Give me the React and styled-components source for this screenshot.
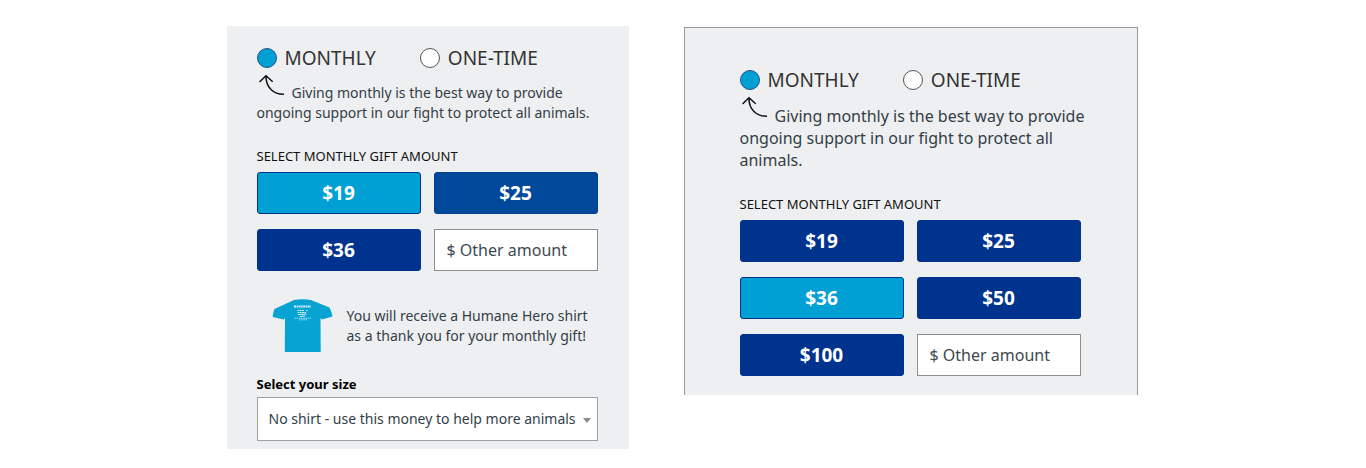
import React, { useState } from "react";
import styled, { createGlobalStyle } from "styled-components";

const GlobalStyle = createGlobalStyle`
  *, *::before, *::after { box-sizing: border-box; }
  body {
    margin: 0;
    background: #fff;
    color: #333e48;
    font-family: "Noto Sans", "Open Sans", sans-serif;
  }
`;

const Page = styled.main`
  display: flex;
  flex-wrap: wrap;
  justify-content: center;
  align-items: flex-start;
  gap: 55px;
  padding: 26px 18px 16px 16px;
`;

const Panel = styled.form`
  flex: 0 1 402px;
  min-width: 0;
  padding: 21px 31px 8px 30px;
  background: #eeeff1;
`;

const FramedPanel = styled(Panel)`
  flex-basis: 454px;
  margin-top: 1px;
  padding: 41px 56px 19px 55px;
  border: 1px solid #97989b;
  border-bottom: 0;
`;

const Group = styled.fieldset`
  min-width: 0;
  margin: 0;
  padding: 0;
  border: 0;
`;

const AmountGroup = styled(Group)`
  margin-top: 24px;
`;

const FrequencyRow = styled.div`
  display: flex;
  flex-wrap: wrap;
  gap: 44px;
`;

const FrequencyLabel = styled.label`
  display: flex;
  align-items: center;
  gap: 8px;
  color: #333;
  font-size: 19px;
  line-height: 22px;
  cursor: pointer;
`;

const Radio = styled.input`
  appearance: none;
  width: 20px;
  height: 20px;
  margin: 0;
  border: 1px solid #55565a;
  border-radius: 50%;
  background: #fff;

  &:checked {
    border-color: #24508f;
    background: #009fd4;
  }
`;

const Note = styled.p`
  margin: 14px -8px 0 0;
  color: #333e48;
  font-size: ${({ $large }) => ($large ? 16 : 14)}px;
  line-height: ${({ $large }) => ($large ? 22 : 20)}px;
`;

const Arrow = styled.svg`
  float: left;
  width: 28px;
  height: 22px;
  margin: -9px 7px 0 0;
`;

const Heading = styled.legend`
  margin: 0 0 7px;
  padding: 0;
  color: #111;
  font-size: 13px;
  line-height: 18px;
`;

const AmountGrid = styled.div`
  display: grid;
  grid-template-columns: 1fr 1fr;
  gap: 15px 13px;
`;

const amountFill = { base: "#00338d", hover: "#004899", selected: "#009fd4" };

const AmountButton = styled.button`
  height: 42px;
  padding: 0;
  border: 1px solid ${({ $tone }) => ($tone === "hover" ? "#004090" : "#00338d")};
  border-radius: 3px;
  background: ${({ $tone }) => amountFill[$tone]};
  color: #fff;
  font: 700 19px/24px "Noto Sans", sans-serif;
  cursor: pointer;
`;

const AmountInput = styled.input`
  width: 100%;
  min-width: 0;
  height: 42px;
  padding: 0 12px;
  border: 1px solid #8e8f92;
  border-radius: 0;
  background: #fff;
  color: #333e48;
  font: 400 16px/24px "Noto Sans", sans-serif;

  &::placeholder {
    color: #404850;
    opacity: 1;
  }
`;

const Gift = styled.div`
  display: flex;
  align-items: center;
  gap: 14px;
  margin-top: 27px;
  padding-left: 15px;
`;

const Shirt = styled.svg`
  flex: none;
  width: 61px;
  height: 56px;
`;

const GiftText = styled.p`
  margin: 0;
  font-size: 14px;
  line-height: 20px;
`;

const SizeLabel = styled.label`
  display: block;
  margin: 21px 0 4px;
  color: #000;
  font-size: 13px;
  font-weight: 700;
  line-height: 18px;
`;

const SelectWrap = styled.div`
  position: relative;
`;

const Select = styled.select`
  appearance: none;
  display: block;
  width: 100%;
  height: 44px;
  padding: 0 16px 0 11px;
  border: 1px solid #a0a1a4;
  border-radius: 0;
  background: #fff;
  color: #333e48;
  font: 400 14px/20px "Noto Sans", sans-serif;
`;

const Caret = styled.svg`
  position: absolute;
  top: 21px;
  right: 7px;
  width: 8px;
  height: 5px;
  pointer-events: none;
`;

function Frequency({ name }) {
  const [value, setValue] = useState("monthly");
  return (
    <Group aria-label="Gift frequency">
      <FrequencyRow>
        {[["monthly", "MONTHLY"], ["once", "ONE-TIME"]].map(([key, text]) => (
          <FrequencyLabel key={key} htmlFor={`${name}-${key}`}>
            <Radio
              type="radio"
              id={`${name}-${key}`}
              name={name}
              checked={value === key}
              onChange={() => setValue(key)}
            />
            {text}
          </FrequencyLabel>
        ))}
      </FrequencyRow>
    </Group>
  );
}

function MonthlyNote({ large }) {
  return (
    <Note $large={large}>
      <Arrow viewBox="0 0 28 22" fill="none" stroke="#111" strokeWidth="1.5" aria-hidden="true">
        <path d="M27 20.3C16.5 20.5 8.8 13.5 9 2M2.5 8L9 1.7L15.7 7.7" />
      </Arrow>
      Giving monthly is the best way to provide ongoing support in our fight to protect all animals.
    </Note>
  );
}

function Amounts({ values, initial, hovered }) {
  const [selected, setSelected] = useState(initial);
  const toneOf = (v) => (v === selected ? "selected" : v === hovered ? "hover" : "base");
  return (
    <AmountGroup>
      <Heading>SELECT MONTHLY GIFT AMOUNT</Heading>
      <AmountGrid>
        {values.map((v) => (
          <AmountButton
            key={v}
            type="button"
            aria-pressed={v === selected}
            $tone={toneOf(v)}
            onClick={() => setSelected(v)}
          >
            ${v}
          </AmountButton>
        ))}
        <AmountInput type="text" inputMode="decimal" aria-label="Other amount" placeholder="$ Other amount" />
      </AmountGrid>
    </AmountGroup>
  );
}

function ShirtPicture() {
  return (
    <Shirt viewBox="0 0 61 56" role="img" aria-label="Humane Hero shirt">
      <path
        d="M21.5 2.2C27 .8 34 .8 39.500 2.200L57.500 9.500C59 12.500 60 16 60.500 18.500L50 21.500L48.500 20L48.700 54H12.800L13 20L11.500 21.500L.7 19C1 16 1.500 13 2.500 11Z"
        fill="#06a3d3"
      />
      <path d="M21.5 2.6Q30.500 5.5 39.500 2.600" fill="none" stroke="#0794c3" strokeWidth=".7" />
      <g fill="none" stroke="#d5f2fa">
        <path d="M22 8.500H39" strokeWidth="1.800" strokeDasharray="2 .6 1.500 .5" />
        <path d="M25.500 12.500H32M34 12.500H35.500M25.500 14.500H34" strokeWidth="1.200" strokeDasharray="1.800 .5" />
        <path d="M26 16.500L34.500 16M28 18.500L33 18" strokeWidth="1.200" />
        <path d="M22.500 20.200H39M27 21.800H35" strokeWidth=".8" strokeDasharray="1.500 .7" />
      </g>
    </Shirt>
  );
}

export default function App() {
  return (
    <>
      <GlobalStyle />
      <Page>
        <Panel>
          <Frequency name="gift-a" />
          <MonthlyNote />
          <Amounts values={[19, 25, 36]} initial={19} hovered={25} />
          <Gift>
            <ShirtPicture />
            <GiftText>You will receive a Humane Hero shirt as a thank you for your monthly gift!</GiftText>
          </Gift>
          <SizeLabel htmlFor="shirt-size">Select your size</SizeLabel>
          <SelectWrap>
            <Select id="shirt-size">
              <option>No shirt - use this money to help more animals</option>
            </Select>
            <Caret viewBox="0 0 8 5" aria-hidden="true">
              <path d="M0 0H8L4 5Z" fill="#8a8b8e" />
            </Caret>
          </SelectWrap>
        </Panel>
        <FramedPanel>
          <Frequency name="gift-b" />
          <MonthlyNote large />
          <Amounts values={[19, 25, 36, 50, 100]} initial={36} />
        </FramedPanel>
      </Page>
    </>
  );
}
